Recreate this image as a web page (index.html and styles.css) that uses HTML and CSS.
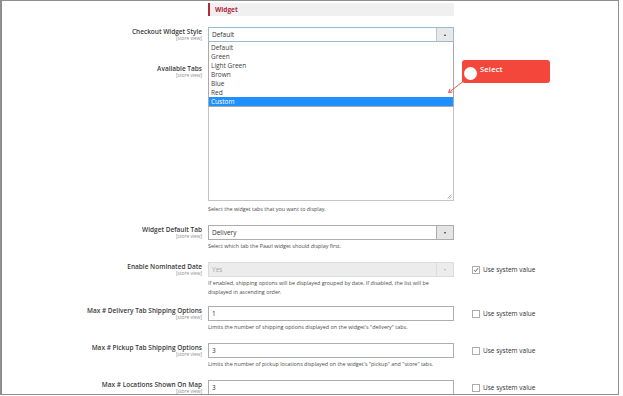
FILE: index.html
```html
<!DOCTYPE html>
<html>
<head>
<meta charset="utf-8">
<link rel="stylesheet" href="styles.css">
</head>
<body>
<div class="frame">
  <div class="row head-row">
    <div></div>
    <div class="section-title">Widget</div>
  </div>

  <div class="row row-first">
    <div class="label"><div class="label-main">Checkout Widget Style</div><div class="scope">[store view]</div></div>
    <div class="ctrl">
      <div class="select focus">
        <span>Default</span>
        <span class="select-btn focus-btn"><span class="arr-up"></span></span>
        <div class="dropdown">
          <div class="opt">Default</div>
          <div class="opt">Green</div>
          <div class="opt">Light Green</div>
          <div class="opt">Brown</div>
          <div class="opt">Blue</div>
          <div class="opt">Red</div>
          <div class="opt sel">Custom</div>
        </div>
      </div>
    </div>
  </div>

  <div class="row">
    <div class="label"><div class="label-main">Available Tabs</div><div class="scope">[store view]</div></div>
    <div class="ctrl">
      <div class="multi">
        <svg class="grip" width="6" height="6" viewBox="0 0 6 6"><path d="M5.5 1.5 L1.5 5.5 M5.5 3.5 L3.5 5.5" stroke="#999" stroke-width="0.7" fill="none"/></svg>
      </div>
      <div class="help help-wide">Select the widget tabs that you want to display.</div>
    </div>
  </div>

  <div class="row">
    <div class="label"><div class="label-main">Widget Default Tab</div><div class="scope">[store view]</div></div>
    <div class="ctrl">
      <div class="select">
        <span>Delivery</span>
        <span class="select-btn"><span class="arr-down"></span></span>
      </div>
      <div class="help">Select which tab the Paazl widget should display first.</div>
    </div>
  </div>

  <div class="row row-tight">
    <div class="label"><div class="label-main">Enable Nominated Date</div><div class="scope">[store view]</div></div>
    <div class="ctrl">
      <div class="select disabled">
        <span>Yes</span>
        <span class="select-btn"><span class="arr-down light"></span></span>
      </div>
      <div class="help">If enabled, shipping options will be displayed grouped by date. If disabled, the list will be displayed in ascending order.</div>
    </div>
    <div class="sys"><span class="cb checked"><svg width="6" height="6" viewBox="0 0 6 6"><path d="M1 3.2 L2.4 4.6 L5 1.2" stroke="#333" stroke-width="0.8" fill="none"/></svg></span>Use system value</div>
  </div>

  <div class="row">
    <div class="label"><div class="label-main">Max # Delivery Tab Shipping Options</div><div class="scope">[store view]</div></div>
    <div class="ctrl">
      <div class="input">1</div>
      <div class="help">Limits the number of shipping options displayed on the widget's "delivery" tabs.</div>
    </div>
    <div class="sys"><span class="cb"></span>Use system value</div>
  </div>

  <div class="row">
    <div class="label"><div class="label-main">Max # Pickup Tab Shipping Options</div><div class="scope">[store view]</div></div>
    <div class="ctrl">
      <div class="input">3</div>
      <div class="help">Limits the number of pickup locations displayed on the widget's "pickup" and "store" tabs.</div>
    </div>
    <div class="sys"><span class="cb"></span>Use system value</div>
  </div>

  <div class="row">
    <div class="label"><div class="label-main">Max # Locations Shown On Map</div><div class="scope">[store view]</div></div>
    <div class="ctrl">
      <div class="input">3</div>
    </div>
    <div class="sys"><span class="cb"></span>Use system value</div>
  </div>

  <div class="callout">
    <span class="dot"></span>
    <span class="callout-text">Select</span>
  </div>
  <svg class="pointer" width="623" height="396" viewBox="0 0 623 396">
    <path d="M463 81.5 L449 92.3" stroke="#e8453a" stroke-width="0.9" fill="none"/>
    <path d="M452.6 92 L448.6 92.5 L450 88.7" stroke="#e8453a" stroke-width="0.9" fill="none"/>
  </svg>
</div>
</body>
</html>
```
FILE: styles.css
```css
* { box-sizing: border-box; }
html, body { margin: 0; padding: 0; background: #fff; }
body { font-family: "Open Sans", "DejaVu Sans", sans-serif; color: #303030; }

.frame {
  width: 619px;
  height: 395px;
  border: 1px solid #8e8e8e;
  border-left-width: 2px;
  position: relative;
  overflow: hidden;
  background: #fff;
}

.row {
  display: grid;
  grid-template-columns: 200px 246px 1fr;
  column-gap: 6px;
  margin-bottom: 11px;
}
.head-row { margin-top: 2px; }
.row-first { margin-bottom: 22px; }
.row-tight { margin-bottom: 9px; }

.section-title {
  height: 13px;
  background: #f0f0f0;
  border-left: 2px solid #b3283c;
  color: #b3283c;
  font-size: 6.5px;
  font-weight: 700;
  line-height: 13px;
  padding-left: 5px;
}

.label { text-align: right; padding-top: 0.5px; }
.label-main { font-size: 6.5px; font-weight: 600; line-height: 8.5px; color: #3a3a3a; white-space: nowrap; }
.scope { font-size: 4.8px; line-height: 5px; color: #8a8a8a; }

.ctrl { min-width: 0; }

.select {
  position: relative;
  height: 15px;
  border: 1px solid #adadad;
  display: flex;
  align-items: center;
  font-size: 6.5px;
  padding-left: 3px;
  color: #303030;
  background: #fff;
}
.select.focus { border-color: #9bbccf; }
.select-btn {
  margin-left: auto;
  width: 17px;
  height: 100%;
  border-left: 1px solid #adadad;
  background: #e4e4e4;
  display: flex;
  align-items: center;
  justify-content: center;
}
.focus-btn { border-left-color: #b9c9d3; background: #e6e8ea; }
.arr-up {
  width: 0; height: 0;
  border-left: 1.5px solid transparent;
  border-right: 1.5px solid transparent;
  border-bottom: 2px solid #333;
}
.arr-down {
  width: 0; height: 0;
  border-left: 1.5px solid transparent;
  border-right: 1.5px solid transparent;
  border-top: 2px solid #333;
}
.arr-down.light { border-top-color: #b5b5b5; }

.select.disabled { background: #ececec; border-color: #dcdcdc; color: #a8a8a8; }
.select.disabled .select-btn { background: #ececec; border-left-color: #dcdcdc; }

.dropdown {
  position: absolute;
  top: 14px;
  left: -1px;
  right: -1px;
  background: #fff;
  border: 1px solid #a9a9a9;
  border-top: none;
  padding-top: 0.5px;
  z-index: 2;
}
.opt {
  height: 9px;
  line-height: 9px;
  font-size: 6.5px;
  padding-left: 2px;
  color: #404040;
}
.opt.sel { background: #1e90ff; color: #fff; }

.multi {
  height: 137px;
  border: 1px solid #c4c4c4;
  display: flex;
  align-items: flex-end;
  justify-content: flex-end;
  padding: 0 1px 1px 0;
}
.grip { display: block; }

.input {
  height: 15px;
  border: 1px solid #adadad;
  font-size: 6.5px;
  line-height: 13px;
  padding-left: 3px;
  color: #303030;
}

.help {
  font-size: 5.4px;
  line-height: 9px;
  color: #4a4a4a;
  margin-top: 2px;
}
.help-wide { margin-top: 4px; }

.sys {
  height: 15px;
  padding-left: 12px;
  display: flex;
  align-items: center;
  font-size: 6.5px;
  color: #303030;
  white-space: nowrap;
}
.cb {
  width: 8px;
  height: 8px;
  border: 1px solid #adadad;
  background: #fff;
  margin-right: 3px;
  display: flex;
  align-items: center;
  justify-content: center;
}
.cb svg { display: block; }

.callout {
  position: absolute;
  left: 460px;
  top: 59px;
  width: 88px;
  height: 23px;
  border-radius: 3px;
  background: #f4473c;
  display: flex;
  align-items: flex-start;
  padding-left: 2px;
  z-index: 3;
}
.dot {
  width: 13px;
  height: 13px;
  border-radius: 50%;
  background: #fff;
  margin-top: 7px;
  margin-right: 3px;
  flex: none;
}
.callout-text {
  color: #fff;
  font-size: 7.5px;
  font-weight: 600;
  line-height: 9px;
  margin-top: 5px;
  letter-spacing: 0.2px;
}
.pointer {
  position: absolute;
  left: -2px;
  top: -1px;
  pointer-events: none;
  z-index: 3;
}
```
